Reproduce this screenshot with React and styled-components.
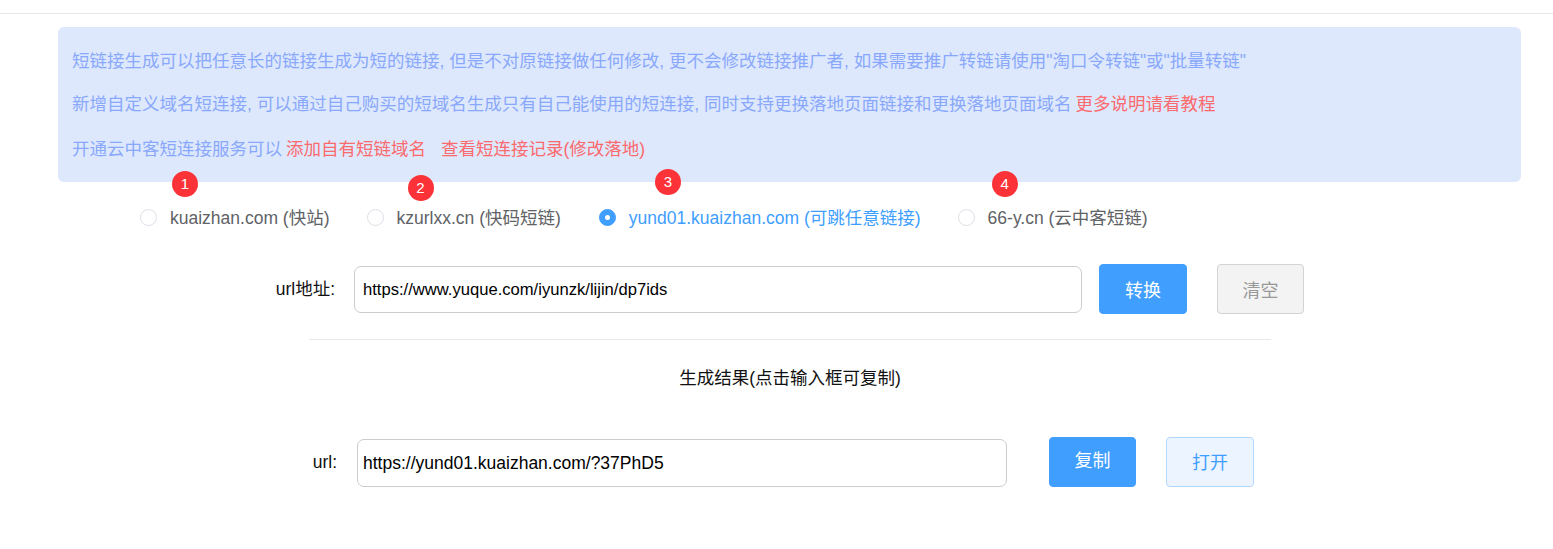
import React from 'react';
import styled, { createGlobalStyle } from 'styled-components';

const GlobalStyle = createGlobalStyle`
  html, body {
    margin: 0;
    padding: 0;
    background: #fff;
    font-family: 'Liberation Sans', 'Noto Sans CJK SC', sans-serif;
  }
`;

const Page = styled.div`
  width: 1553px;
  height: 549px;
  overflow: hidden;
  padding-top: 13px;
  box-sizing: border-box;
`;

const TopLine = styled.div`
  height: 1px;
  background: #e6e6e6;
  margin-bottom: 13px;
`;

const Notice = styled.div`
  margin-left: 58px;
  width: 1463px;
  height: 155px;
  box-sizing: border-box;
  padding: 12px 14px 0;
  background: #dde8fd;
  border-radius: 6px;
  color: #8aa8fb;
  font-size: 17.5px;
`;

const NoticeLine = styled.div`
  height: ${(p) => p.$h}px;
  line-height: ${(p) => p.$h}px;
  white-space: nowrap;
`;

const RedLink = styled.span`
  color: #fb6a6d;
  margin-left: ${(p) => p.$gap || 4}px;
`;

const RadioRow = styled.div`
  display: flex;
  height: 70px;
  padding-left: 140px;
  align-items: center;
`;

const RadioItem = styled.label`
  position: relative;
  display: flex;
  align-items: center;
  margin-right: ${(p) => p.$mr}px;
  font-size: 17.5px;
  color: ${(p) => (p.$active ? '#409eff' : '#606266')};
  white-space: nowrap;
`;

const RadioDot = styled.span`
  width: 17px;
  height: 17px;
  box-sizing: border-box;
  border-radius: 50%;
  margin-right: 13px;
  display: flex;
  align-items: center;
  justify-content: center;
  background: ${(p) => (p.$active ? '#409eff' : '#fff')};
  border: 1px solid ${(p) => (p.$active ? '#409eff' : '#dcdfe6')};

  &::after {
    content: '';
    width: 5px;
    height: 5px;
    border-radius: 50%;
    background: #fff;
    display: ${(p) => (p.$active ? 'block' : 'none')};
  }
`;

const RadioText = styled.span`
  margin-bottom: 2px;
`;

const Badge = styled.span`
  position: absolute;
  left: ${(p) => p.$x}px;
  top: ${(p) => p.$y}px;
  width: 26px;
  height: 26px;
  border-radius: 50%;
  background: #fb3338;
  color: #fff;
  font-size: 15px;
  line-height: 26px;
  text-align: center;
`;

const FormRow = styled.div`
  display: flex;
  align-items: center;
  height: 50px;
  margin-top: ${(p) => p.$mt || 0}px;
`;

const RowLabel = styled.div`
  width: ${(p) => p.$w}px;
  text-align: right;
  font-size: 17.5px;
  color: #111;
  padding-right: ${(p) => p.$pr}px;
  margin-bottom: ${(p) => p.$mb || 0}px;
  box-sizing: border-box;
`;

const TextField = styled.input`
  width: ${(p) => p.$w}px;
  height: ${(p) => p.$h}px;
  box-sizing: border-box;
  padding: 1px ${(p) => p.$px}px 0;
  margin-top: ${(p) => p.$mt || 0}px;
  border: 1px solid #ccc;
  border-radius: 7px;
  font-family: inherit;
  font-size: ${(p) => p.$fs}px;
  color: #000;
  outline: none;
`;

const ActionButton = styled.button`
  width: ${(p) => p.$w}px;
  height: 50px;
  margin-left: ${(p) => p.$ml}px;
  box-sizing: border-box;
  border-radius: 4px;
  font-family: inherit;
  font-size: 18px;
  padding: 0 0 ${(p) => p.$pb || 0}px;
  color: ${(p) => (p.$kind === 'primary' ? '#fff' : p.$kind === 'plain' ? '#409eff' : '#999')};
  background: ${(p) => (p.$kind === 'primary' ? '#409eff' : p.$kind === 'plain' ? '#ecf5ff' : '#f3f3f3')};
  border: 1px solid ${(p) => (p.$kind === 'primary' ? '#409eff' : p.$kind === 'plain' ? '#b3d8ff' : '#d3d3d3')};
`;

const Divider = styled.div`
  width: 962px;
  height: 1px;
  margin: 25px 0 0 309px;
  background: #e8e8e8;
`;

const ResultTitle = styled.div`
  width: 962px;
  margin-left: 309px;
  margin-top: 28px;
  height: 20px;
  line-height: 20px;
  font-size: 17.5px;
  color: #111;
  text-align: center;
`;

const radios = [
  { text: 'kuaizhan.com (快站)', mr: 37, badge: [32, -33] },
  { text: 'kzurlxx.cn (快码短链)', mr: 38, badge: [41, -29] },
  { text: 'yund01.kuaizhan.com (可跳任意链接)', mr: 37, active: true, badge: [56, -35] },
  { text: '66-y.cn (云中客短链)', mr: 0, badge: [34, -33] },
];

export default function App() {
  return (
    <Page>
      <GlobalStyle />
      <TopLine />
      <Notice>
        <NoticeLine $h={44}>
          短链接生成可以把任意长的链接生成为短的链接, 但是不对原链接做任何修改, 更不会修改链接推广者, 如果需要推广转链请使用"淘口令转链"或"批量转链"
        </NoticeLine>
        <NoticeLine $h={43}>
          新增自定义域名短连接, 可以通过自己购买的短域名生成只有自己能使用的短连接, 同时支持更换落地页面链接和更换落地页面域名
          <RedLink>更多说明请看教程</RedLink>
        </NoticeLine>
        <NoticeLine $h={46}>
          开通云中客短连接服务可以
          <RedLink>添加自有短链域名</RedLink>
          <RedLink $gap={15}>查看短连接记录(修改落地)</RedLink>
        </NoticeLine>
      </Notice>
      <RadioRow>
        {radios.map((r, i) => (
          <RadioItem key={r.text} $mr={r.mr} $active={r.active}>
            <RadioDot $active={r.active} />
            <RadioText>{r.text}</RadioText>
            <Badge $x={r.badge[0]} $y={r.badge[1]}>{i + 1}</Badge>
          </RadioItem>
        ))}
      </RadioRow>
      <FormRow $mt={12}>
        <RowLabel $w={354} $pr={19} $mb={3}>url地址:</RowLabel>
        <TextField $w={728} $h={47} $fs={16.6} $px={8} readOnly value="https://www.yuque.com/iyunzk/lijin/dp7ids" />
        <ActionButton $kind="primary" $w={88} $ml={17}>转换</ActionButton>
        <ActionButton $kind="muted" $w={87} $ml={30}>清空</ActionButton>
      </FormRow>
      <Divider />
      <ResultTitle>生成结果(点击输入框可复制)</ResultTitle>
      <FormRow $mt={49}>
        <RowLabel $w={357} $pr={20}>url:</RowLabel>
        <TextField $w={650} $h={48} $mt={2} $fs={17.5} $px={5} readOnly value="https://yund01.kuaizhan.com/?37PhD5" />
        <ActionButton $kind="primary" $w={87} $ml={42} $pb={6}>复制</ActionButton>
        <ActionButton $kind="plain" $w={88} $ml={30} $pb={3}>打开</ActionButton>
      </FormRow>
    </Page>
  );
}
